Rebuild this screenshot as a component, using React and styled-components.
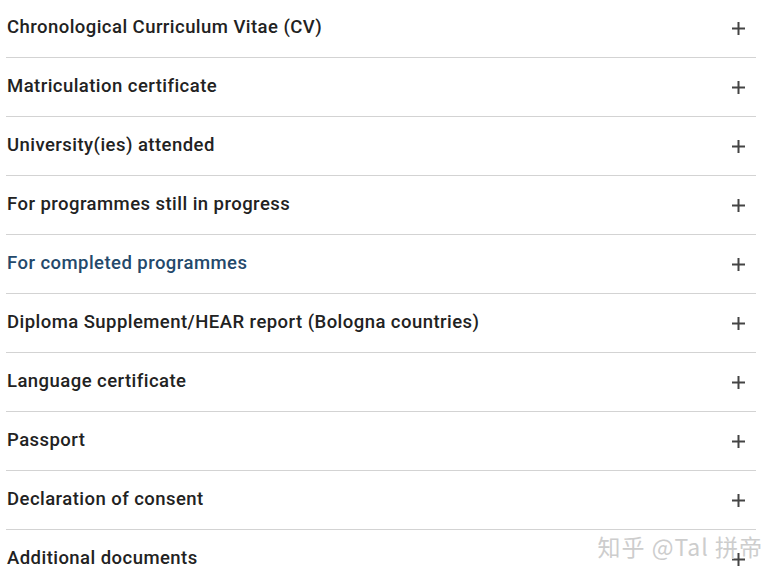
import React from 'react';
import styled, { createGlobalStyle } from 'styled-components';

const GlobalStyle = createGlobalStyle`
  html, body {
    margin: 0;
    padding: 0;
    background: #ffffff;
    overflow: hidden;
  }
`;

const Page = styled.div`
  position: relative;
  width: 781px;
  height: 585px;
  overflow: hidden;
  padding: 0 25px 0 6px;
  box-sizing: border-box;
  font-family: Roboto, "Noto Sans", sans-serif;
`;

const List = styled.div`
  margin-top: -1px;
  display: flex;
  flex-direction: column;
`;

const Row = styled.div`
  height: 59px;
  box-sizing: border-box;
  border-bottom: 1px solid #d3d3d3;
  display: flex;
  justify-content: space-between;
  align-items: flex-start;
  padding: 17px 11px 0 1px;
  cursor: pointer;
`;

const Title = styled.span`
  font-size: 18.5px;
  line-height: 22px;
  font-weight: 500;
  letter-spacing: 0.45px;
  color: ${(p) => (p.active ? '#24496b' : '#222222')};
`;

const Plus = styled.svg`
  width: 13px;
  height: 13px;
  margin-top: 6px;
  flex-shrink: 0;
`;

const Watermark = styled.div`
  position: absolute;
  right: 18px;
  bottom: 22px;
  font-family: "Noto Sans CJK SC", "Noto Sans", sans-serif;
  font-size: 23px;
  color: #cdcdcd;
  letter-spacing: 1px;
  text-shadow: 0 0 1px rgba(255, 255, 255, 0.9);
  pointer-events: none;
`;

const items = [
  'Chronological Curriculum Vitae (CV)',
  'Matriculation certificate',
  'University(ies) attended',
  'For programmes still in progress',
  'For completed programmes',
  'Diploma Supplement/HEAR report (Bologna countries)',
  'Language certificate',
  'Passport',
  'Declaration of consent',
  'Additional documents',
];

const PlusIcon = () => (
  <Plus viewBox="0 0 13 13">
    <path d="M6.5 0v13M0 6.5h13" stroke="#444" strokeWidth="2" fill="none" />
  </Plus>
);

const App = () => {
  return (
    <Page>
      <GlobalStyle />
      <List>
        {items.map((item) => (
          <Row key={item}>
            <Title active={item === 'For completed programmes'}>{item}</Title>
            <PlusIcon />
          </Row>
        ))}
      </List>
      <Watermark>知乎 @Tal 拼帝</Watermark>
    </Page>
  );
};

export default App;
